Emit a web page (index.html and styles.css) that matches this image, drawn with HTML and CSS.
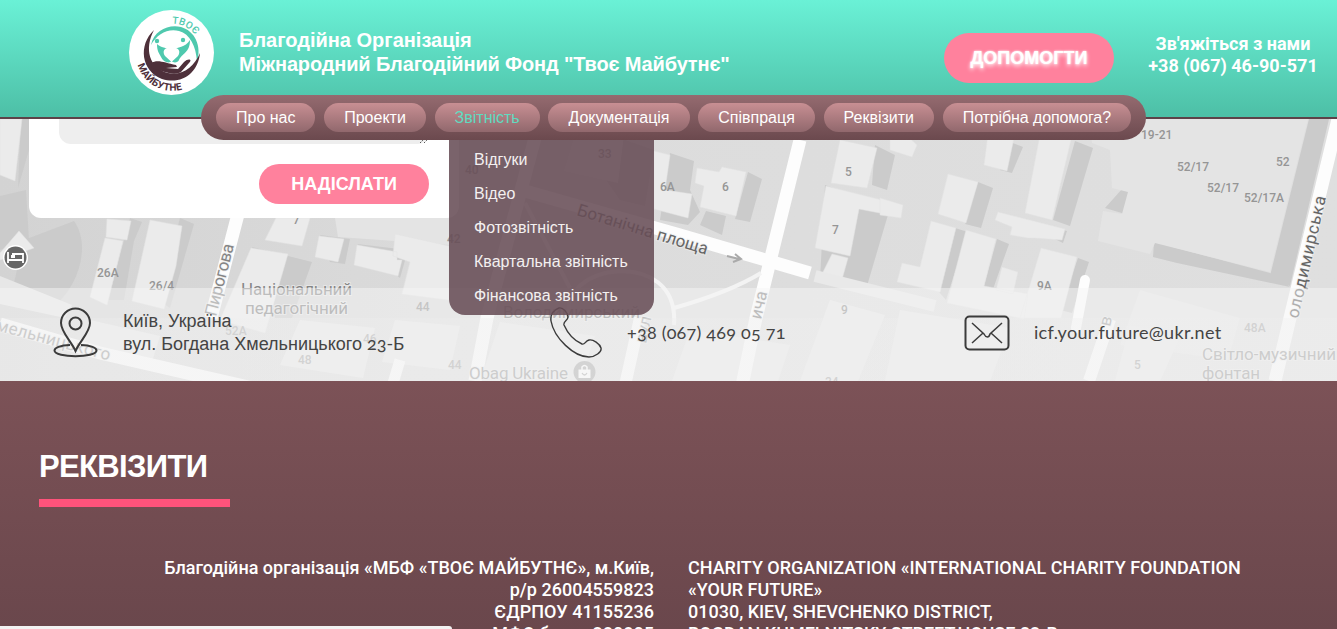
FILE: index.html
```html
<!DOCTYPE html>
<html lang="uk">
<head>
<meta charset="utf-8">
<title>Твоє Майбутнє</title>
<link rel="stylesheet" href="styles.css">
</head>
<body>
<header class="header">
  <svg class="logo" viewBox="0 0 85 85">
    <defs>
      <path id="arcTop" d="M41 13.800 A29 29 0 0 1 72 38"/>
      <path id="arcBottom" d="M8.500 54 A36 36 0 0 0 68 71"/>
    </defs>
    <circle cx="42.500" cy="42.500" r="42.500" fill="#fff"/>
    <path d="M22 35 C25 20 40 14 52 17 C66 21 73 36 68 52 C67 36 61 24 50 21 C39 18 28 24 22 35Z" fill="#4fc9ae"/>
    <path d="M25 20 C9 35 12 61 33 69 C53 75 69 63 71 43 C65 57 54 66 39 63 C20 58 15 39 25 20Z" fill="#4e303a"/>
    <path d="M22 53 C29 49 36 53 47 55 L48 57 L37 58 L49 59 L55 52 C59 48 64 49 60 53 L52 62 C43 67 29 59 23 58Z" fill="#4e303a"/>
    <path d="M28 34 C32 38 37 37 42.500 41 C49 36 56 38 61 30 C61 43 53 43 50 50 C49 53 44 53 42.500 51 C40 54 34 52 32 47 C30 43 28 41 28 34Z" fill="#4fc9ae"/>
    <path d="M42.500 52 L36 46 C32 40 38 35 42.500 40 C47 35 53 40 49 46Z" fill="#fff"/>
    <circle cx="28" cy="31" r="2.200" fill="#4fc9ae"/><circle cx="54" cy="30" r="2.200" fill="#4fc9ae"/>
    <text class="logo-top"><textPath href="#arcTop" startOffset="2">ТВОЄ</textPath></text>
    <text class="logo-bottom"><textPath href="#arcBottom" startOffset="1">МАЙБУТНЕ</textPath></text>
  </svg>
  <h1 class="title">Благодійна Організація<br><span>Міжнародний Благодійний Фонд "Твоє Майбутнє"</span></h1>
  <a class="button help">ДОПОМОГТИ</a>
  <p class="call">Зв'яжіться з нами<br>+38 (067) 46-90-571</p>
</header>

<nav class="nav">
  <a>Про нас</a><a>Проекти</a><a class="active">Звітність</a><a>Документація</a><a>Співпраця</a><a>Реквізити</a><a class="wide">Потрібна допомога?</a>
</nav>
<ul class="submenu">
  <li>Відгуки</li><li>Відео</li><li>Фотозвітність</li><li>Квартальна звітність</li><li>Фінансова звітність</li>
</ul>

<section class="location">
  <svg class="map" viewBox="0 119 1337 262" width="1337" height="262">
    <defs>
      <linearGradient id="ground"><stop offset="0" stop-color="#d3d3d3"/><stop offset=".4" stop-color="#dcdcdc"/><stop offset="1" stop-color="#dfdfdf"/></linearGradient>
    </defs>
    <rect x="0" y="119" width="1337" height="262" fill="url(#ground)"/>
    <!-- building shadows -->
    <g fill="#cbcbcb">
      <path d="M0 196 L26 190 L29 240 L0 250Z"/>
      <path d="M24 240 L74 221 C90 243 82 285 50 310 L10 300Z"/>
      <path d="M21 119H29V150L18 188Z M130 218 L142 222 L134 241 L124 300 L108 300Z M180 218 L194 224 L170 308 L158 300Z"/>
      <path d="M252 247 L312 262 L292 318 L275 318Z M320 235 L350 239 L345 264 L330 262Z M357 244 L408 250 L400 278Z M395 233 L420 237 L413 262Z"/>
      <path d="M564 119 L654 150 L645 206 L620 200Z M670 153 L694 161 L690 190 L700 212 L688 225 L660 220Z M748 172 L762 179 L750 222 L735 219Z M706 211 L726 216 L722 235 L700 225Z"/>
      <path d="M825 185 L890 208 L867 286 L820 280Z M875 145 L895 155 L887 190 L872 185Z M978 182 L993 188 L981 228 L965 224Z M1010 142 L1023 147 L1012 173 L1000 170Z M1075 141 L1093 148 L1070 226 L1053 220Z"/>
      <path d="M955 228 L968 232 L946 300 L939 292Z M997 239 L1009 244 L992 292 L984 286Z M1078 258 L1089 262 L1072 313 L1060 310Z M1010 217 L1067 231 L1063 243Z M1122 189 L1129 192 L1125 214 L1105 208Z"/>
      <path d="M1309 119 H1329 L1290 286 L1269 280Z M1154 242 L1270 273 L1290 287 L1177 263 L1153 257Z"/>
    </g>
    <g fill="#e4e4e4">
      <path d="M1090 119H1308L1270 272L1155 243L1150 254L1098 241L1103 211L1122 214L1128 192L1112 188L1110 150L1092 143Z M1140 290 L1240 318 L1228 360 L1120 345Z M580 119 L626 119 L618 183 L564 171Z M335 218 H450 V245 L338 237Z"/>
    </g>
    <!-- building roofs -->
    <g fill="#ebebeb" stroke="#e2e2e2" stroke-width=".5">
      <path d="M0 119H22L15 181L0 175Z M19 231 L0 253 V260 L34 248Z M107 219 L131 221 L127 240 L106 237Z M105 238 L123 241 L107 305 L90 297Z M150 220 L182 226 L176 266 L164 309 L132 301Z"/>
      <path d="M251 248 L288 254 L265 333 L220 320Z M319 236 L344 239 L338 262 L315 257Z M357 245 L397 252 V260 L402 260 L398 276 L354 265Z M395 234 L449 246 V300 L402 294 L410 262 L393 256Z M276 218H310L302 246L265 240Z"/>
      <path d="M654 151 L670 155 L665 190 L692 194 L688 218 L654 209Z M697 168 L719 172 L722 167 L746 172 L736 216 L700 207 L704 186 L695 183Z"/>
      <path d="M840 140 L877 148 L867 188 L831 183Z M826 186 L890 202 V215 L859 209 L850 256 L815 248Z M832 254 L848 258 L841 283 L820 278Z M890 119 L917 145 L912 157 L890 150Z"/>
      <path d="M880 198 L903 205 L901 218 L880 215Z M948 174 L978 182 L966 223 L938 214Z M990 119H1018L1007 171L984 165Z M1043 119H1076L1052 220L1025 213Z M998 212 L1065 229 L1062 240 L1035 238 L1028 238 L1010 235 L1012 227 L995 220Z"/>
      <path d="M931 221 L956 228 L940 292 L897 282 L902 263 L920 267Z M966 230 L996 239 L984 286 L1028 294 L1024 319 L947 303Z M1002 267 L1018 272 L1013 294 L996 290Z M1041 248 L1077 257 L1061 318 L1020 318Z"/>
    </g>
    <!-- lower blocks -->
    <g fill="#e7e7e7">
      <path d="M0 276 L72 305 L65 318 L0 304Z M90 320 L160 336 L151 365 L80 350Z M300 320 L375 328 L363 378 L280 365Z M395 320 L460 326 L450 370 L382 362Z M500 322 L595 336 L580 381 H480Z M690 330 L790 345 L778 381 H672Z M830 300 L885 315 L858 381 H800Z M900 310 L1010 328 L990 381 H885Z M1130 325 L1180 337 L1160 381 H1115Z"/>
    </g>
    <!-- streets -->
    <g fill="none" stroke="#fdfdfd" stroke-width="13">
      <path d="M0 324 L100 353 L270 392"/>
      <path d="M250 175 L237 218 L211 318"/>
      <path d="M540 119 L487 318 L475 381"/>
      <path d="M525 191 L680 235 L810 273"/>
      <path d="M800 140 L756 318 L739 400"/>
      <path d="M1338 119 L1290 318 L1275 381"/>
      <path d="M640 318 L624 390" stroke-width="12"/>
      <path d="M1085 280 L1076 328" stroke-width="10" stroke-linecap="round"/>
      <path d="M1110 319 L1089 381" stroke-width="12"/>
      <path d="M400 360 L388 400" stroke-width="11"/>
    </g>
    <g fill="none" stroke="#f3f3f3" stroke-width="4">
      <path d="M525 203 L570 288 M570 318 C555 264 680 245 674 325 M674 308 Q730 292 761 273"/>
      <path d="M815 276 L935 306" stroke="#e9e9e9" stroke-width="12"/>
    </g>
    <g class="map-number">
      <text x="97" y="277">26А</text><text x="149" y="290">26/4</text><text x="293" y="224">7</text>
      <text x="225" y="335">52А</text><text x="416" y="311">44</text><text x="298" y="364">48</text><text x="363" y="343">46</text>
      <text x="447" y="243">42</text><text x="465" y="174">40</text><text x="598" y="158">33</text><text x="448" y="369">44</text>
      <text x="660" y="191">6А</text><text x="722" y="191">6</text><text x="845" y="176">5</text><text x="832" y="234">7</text><text x="841" y="314">9</text>
      <text x="1037" y="290">9А</text><text x="1141" y="139">19-21</text><text x="1177" y="171">52/17</text><text x="1276" y="166">52</text>
      <text x="1207" y="192">52/17</text><text x="1244" y="202">52/17А</text><text x="1244" y="332">48А</text><text x="1134" y="369">5</text><text x="825" y="386">34</text>
    </g>
    <g class="map-name">
      <text transform="translate(216 317) rotate(-76)" textLength="74">Пирогова</text>
      <text x="241" y="295" textLength="111">Національний</text><text x="245" y="314" textLength="103">педагогічний</text>
      <text transform="translate(-5 330) rotate(15)" textLength="118">мельницького</text>
      <text class="dark" transform="translate(576 215) rotate(17)" textLength="136">Ботанічна площа</text>
      <text x="503" y="318" textLength="137">Володимирський</text>
      <text transform="translate(646 344) rotate(-78)">вул</text>
      <text transform="translate(761 320) rotate(-77)">ича</text>
      <text class="dark" transform="translate(1298 319) rotate(-77)" textLength="125">олодимирська</text>
      <text transform="translate(1110 327) rotate(-77)">в</text>
      <text x="469" y="379" textLength="99">Obag Ukraine</text>
      <text x="1202" y="360" textLength="134">Світло-музичний</text><text x="1202" y="379" textLength="58">фонтан</text>
    </g>
    <path d="M727 256 L739 259 M735 254 L741 259 L733 262" fill="none" stroke="#aaa" stroke-width="2"/>
    <circle cx="15.500" cy="257.500" r="12.500" fill="#fff"/><circle cx="15.500" cy="257.500" r="11" fill="#666"/>
    <path d="M8 252V263 M8 260H23V263 M12 254H23V260" fill="none" stroke="#fff" stroke-width="1.800"/><rect x="11" y="255" width="4" height="3" fill="#fff"/>
    <circle cx="584.500" cy="372" r="11" fill="#999"/><path d="M578.500 369.500H590.500V378H578.500Z" fill="#fff"/><path d="M582 370V367Q584.500 364 587 367V370" fill="none" stroke="#fff" stroke-width="1.500"/><path d="M582 373Q584.500 377 587 373" fill="none" stroke="#999" stroke-width="1.300"/>
  </svg>
  <form class="form">
    <div class="field"><svg width="10" height="10" viewBox="0 0 10 10"><path d="M1 9L9 1M5 9L9 5" stroke="#555" stroke-dasharray="1.500 1"/></svg></div>
    <a class="button">НАДІСЛАТИ</a>
  </form>
  <div class="contacts">
    <div class="contact">
      <svg width="46" height="52" viewBox="0 0 46 52"><path d="M22.500 44 C18 34 8 25 8 16 A14.500 14.500 0 0 1 37 16 C37 25 27 34 22.500 44Z"/><circle cx="22.500" cy="16.500" r="6"/><path d="M17 38 C7 38 1.500 41 1.500 43.500 C1.500 51 43.500 51 43.500 43.500 C43.500 41 38 38 28 38"/></svg>
      <span class="address">Київ, Україна<br>вул. Богдана Хмельницького <b>23-Б</b></span>
    </div>
    <div class="contact">
      <svg class="handset" width="54" height="52" viewBox="0 0 54 52"><path d="M10 1 C5 3 1 7 2 14 C5 31 25 50 40 50 C46 50 53 45 52 41 C51 37 44 32 40 33 C36 34 36 38 33 37 C26 34 19 27 15 18 C14 14 19 14 19 10 C19 6 14 0 10 1Z"/></svg>
      <span class="phone">+38 (067) 469 05 71</span>
    </div>
    <div class="contact">
      <svg width="46" height="36" viewBox="0 0 46 36"><rect x="1.500" y="1.500" width="43" height="33" rx="4"/><path d="M8 8 L20 19 C22 23 25 23 26 19 L38 8 M8 28 L19 18 M27 18 L38 28" stroke-width="1.500"/></svg>
      <span class="email">icf.your.future@ukr.net</span>
    </div>
  </div>
</section>

<section class="details">
  <h2>РЕКВІЗИТИ</h2>
  <div class="columns">
    <p class="ua">Благодійна організація «МБФ «ТВОЄ МАЙБУТНЄ», м.Київ,<br>р/р 26004559823<br>ЄДРПОУ 41155236<br>МФО банку 380805</p>
    <p>CHARITY ORGANIZATION «INTERNATIONAL CHARITY FOUNDATION<br>«YOUR FUTURE»<br>01030, KIEV, SHEVCHENKO DISTRICT,<br>BOGDAN KHMELNITSKY STREET,HOUSE 23-B</p>
  </div>
</section>
<div class="status"></div>
</body>
</html>
```
FILE: styles.css
```css
* { box-sizing: border-box; }
body { margin: 0; height: 629px; overflow: hidden; position: relative; font-family: "Liberation Sans", sans-serif; background: #6d494e; }
h1, h2, p, ul { margin: 0; padding: 0; }
.header { height: 119px; display: flex; padding: 10px 19px 0 129px; border-bottom: 2px solid #5d4248; background: linear-gradient(#6af1d6, #4dbfa6); color: #fff; }
.logo { width: 85px; height: 85px; flex: none; }
.logo-top { font: 500 10px Roboto, sans-serif; fill: #4fc9ae; letter-spacing: .2px; }
.logo-bottom { font: bold 10px Roboto, sans-serif; fill: #4e303a; letter-spacing: .3px; }
.title { font-size: 20px; line-height: 24px; margin: 18px 0 0 25px; white-space: nowrap; }
.title span { letter-spacing: -.15px; }
.button { width: 170px; height: 40px; border-radius: 25px; background: #ff819d; color: #fff; font-weight: bold; font-size: 18px; display: flex; align-items: center; justify-content: center; }
.help { height: 50px; margin: 23px 0 0 auto; text-shadow: 0 2px 4px #fff, 0 0 2px #fff; }
.call { margin: 23px 0 0 34px; width: 170px; white-space: nowrap; text-align: center; font: bold 18px/22px Roboto, sans-serif; }
.nav { position: absolute; z-index: 3; left: 201px; top: 95px; width: 945px; height: 45px; padding: 8px 15px; display: flex; justify-content: space-between; border-radius: 23px; background: linear-gradient(#956b70, #6b494e); }
.nav a { height: 29px; padding: 0 20px; line-height: 29px; font-size: 16px; color: #fff; border-radius: 15px; background: linear-gradient(#c88f93, #91686d); white-space: nowrap; }
.nav .active { color: #5fdbc0; }
.nav .wide { letter-spacing: -.11px; }
.submenu { position: absolute; z-index: 2; left: 449px; top: 119px; width: 205px; height: 196px; padding: 24px 25px; list-style: none; border-radius: 0 0 16px 16px; background: rgba(104, 77, 87, .88); color: #f3f0f0; font-size: 16px; line-height: 34px; white-space: nowrap; }
.location { display: grid; grid-template: 99px 70px 93px / 1fr; height: 262px; }
.map { grid-area: 1 / 1 / 4 / 2; }
.map-number { font: 500 12px Roboto, sans-serif; fill: #959595; }
.map-name { font: 17px Roboto, sans-serif; fill: #858585; paint-order: stroke; stroke: #eeeeeeaa; stroke-width: 2px; }
.map-name .dark { fill: #666; }
.form { grid-area: 1 / 1; z-index: 1; margin-left: 29px; width: 430px; height: 99px; padding: 0 30px; background: #fff; border-radius: 0 0 12px 12px; display: flex; flex-direction: column; align-items: flex-end; gap: 20px; }
.field { width: 100%; height: 25px; background: #eee; border-radius: 0 0 12px 12px; display: flex; justify-content: flex-end; align-items: flex-end; }
.contacts { grid-area: 3 / 1; z-index: 1; display: grid; grid-template-columns: 496px 415px 1fr; align-items: center; padding: 0 0 4px 53px; background: linear-gradient(transparent 30px, rgba(238, 238, 238, .32) 30px), rgba(246, 246, 246, .5); color: #444; font-size: 18px; }
.contact { display: flex; align-items: center; gap: 24px; white-space: nowrap; }
.contact svg { fill: none; stroke: #3b3b3b; stroke-width: 2; }
.contact .handset { stroke-width: 1.4; }
.address { line-height: 22px; }
.address b { font-weight: normal; }
.phone, .email, .address b { font-family: Lato, "Open Sans", sans-serif; font-variant-numeric: oldstyle-nums; }
.phone { letter-spacing: .22px; position: relative; top: -1px; }
.email { letter-spacing: .3px; position: relative; top: -1px; }
.details { height: 248px; padding: 67px 39px 0; background: linear-gradient(#7c5257, #6a474c); color: #fff; }
.details h2 { width: 191px; height: 59px; font-size: 31px; line-height: 38px; letter-spacing: -.65px; border-bottom: 8px solid #ff537b; }
.columns { display: grid; grid-template-columns: 615px 1fr; column-gap: 34px; margin-top: 50px; font: 500 18px/22px Roboto, sans-serif; white-space: nowrap; }
.ua { text-align: right; }
.status { position: absolute; left: 0; bottom: 0; width: 452px; height: 3px; background: #f2f2f2; border-radius: 0 3px 0 0; }
```
